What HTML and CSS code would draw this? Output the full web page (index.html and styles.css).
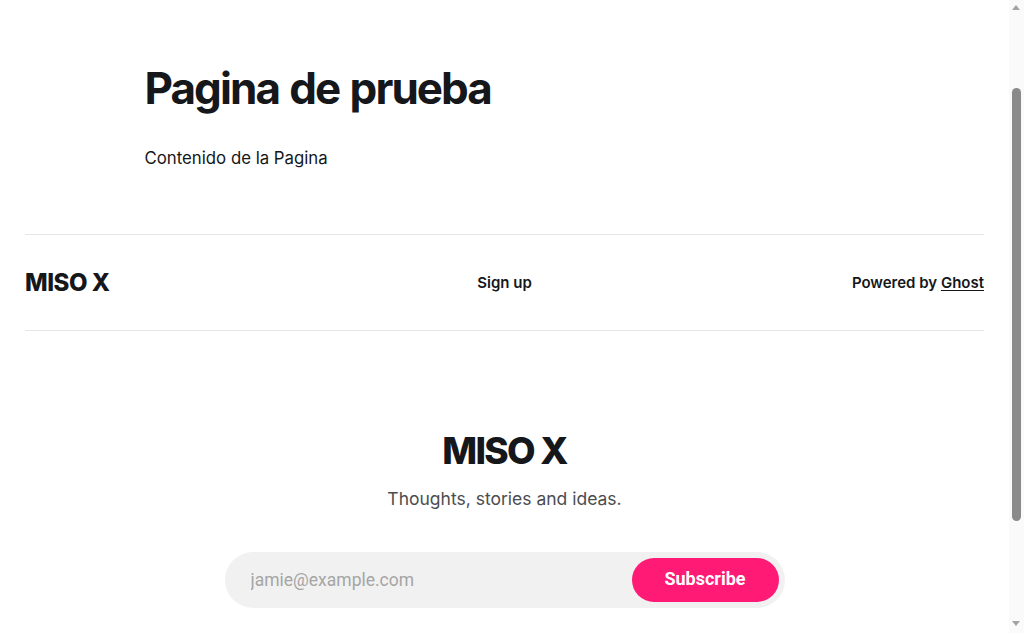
FILE: index.html
```html
<!DOCTYPE html>
<html lang="es">
<head>
<meta charset="utf-8">
<title>Pagina de prueba - MISO X</title>
<link rel="stylesheet" href="styles.css">
</head>
<body>
<div class="page">
  <main class="site-main">
    <article class="article">
      <h1 class="article-title">Pagina de prueba</h1>
      <div class="article-content">
        <p>Contenido de la Pagina</p>
      </div>
    </article>
  </main>
  <footer class="site-footer">
    <div class="footer-bar">
      <a class="footer-logo" href="#">MISO X</a>
      <nav class="footer-menu"><a href="#">Sign up</a></nav>
      <div class="footer-copy">Powered by <a href="#">Ghost</a></div>
    </div>
    <section class="footer-signup">
      <h2 class="signup-title">MISO X</h2>
      <p class="signup-sub">Thoughts, stories and ideas.</p>
      <form class="signup-form">
        <input class="signup-input" type="email" placeholder="jamie@example.com">
        <button class="signup-btn" type="button">Subscribe</button>
      </form>
    </section>
  </footer>
</div>
<div class="scrollbar" aria-hidden="true">
  <span class="sb-arrow sb-up"></span>
  <span class="sb-thumb"></span>
  <span class="sb-arrow sb-down"></span>
</div>
</body>
</html>
```

FILE: styles.css
```css
* { box-sizing: border-box; }
html { overflow: hidden; height: 100%; }
body {
  margin: 0;
  height: 100%;
  font-family: Inter, "Noto Sans", sans-serif;
  color: #15171a;
  background: #fff;
}
a { color: inherit; text-decoration: none; }

.page { width: calc(100% - 15px); }

.site-main { padding-top: 64px; }
.article { width: 720px; margin: 0 auto; }
.article-title {
  margin: 0;
  font-size: 44px;
  line-height: 1.13;
  font-weight: 700;
  letter-spacing: -0.044em;
  word-spacing: 0.04em;
}
.article-content { margin-top: 31px; font-size: 16.8px; line-height: 1.6; }
.article-content p { margin: 0; }

.site-footer { margin-top: 62px; padding: 0 25px; }
.footer-bar {
  height: 97px;
  display: grid;
  grid-template-columns: 1fr auto 1fr;
  align-items: center;
  border-top: 1px solid #e6e6e6;
  border-bottom: 1px solid #e6e6e6;
  font-size: 15px;
  font-weight: 600;
}
.footer-logo { justify-self: start; font-size: 24px; font-weight: 800; letter-spacing: -0.02em; }
.footer-copy { justify-self: end; }
.footer-copy a { text-decoration: underline; text-underline-offset: 2px; }

.footer-signup {
  padding: 100px 0 20px;
  display: flex;
  flex-direction: column;
  align-items: center;
}
.signup-title {
  margin: 0;
  font-size: 37px;
  line-height: 1.1;
  font-weight: 800;
  letter-spacing: -0.047em;
}
.signup-sub { margin: 16px 0 0; font-size: 17.5px; line-height: 1.4; color: #4b4d50; }
.signup-form {
  margin-top: 40px;
  width: 560px;
  height: 56px;
  border-radius: 28px;
  background: #f1f1f1;
  display: flex;
  align-items: center;
  padding: 6px;
}
.signup-input {
  flex: 1;
  min-width: 0;
  height: 100%;
  border: 0;
  background: transparent;
  padding: 0 0 0 20px;
  font-family: Roboto, sans-serif;
  font-size: 17.5px;
  outline: none;
}
.signup-input::placeholder { color: #a5a5a5; }
.signup-btn {
  width: 147px;
  height: 44px;
  border: 0;
  border-radius: 22px;
  background: #ff1a75;
  color: #fff;
  font-family: Roboto, sans-serif;
  font-size: 18px;
  font-weight: 700;
  padding: 0 0 2px;
}

.scrollbar {
  position: fixed;
  top: 0;
  right: 0;
  width: 15px;
  height: 100%;
  background: #fafafa;
}
.sb-arrow {
  position: absolute;
  left: 3px;
  width: 0;
  height: 0;
  border-left: 4.5px solid transparent;
  border-right: 4.5px solid transparent;
}
.sb-up { top: 5px; border-bottom: 5px solid #a3a3a3; }
.sb-down { bottom: 7px; border-top: 5px solid #a3a3a3; }
.sb-thumb {
  position: absolute;
  left: 3px;
  top: 88px;
  width: 9px;
  height: 433px;
  border-radius: 5px;
  background: #8a8a8a;
}
```
